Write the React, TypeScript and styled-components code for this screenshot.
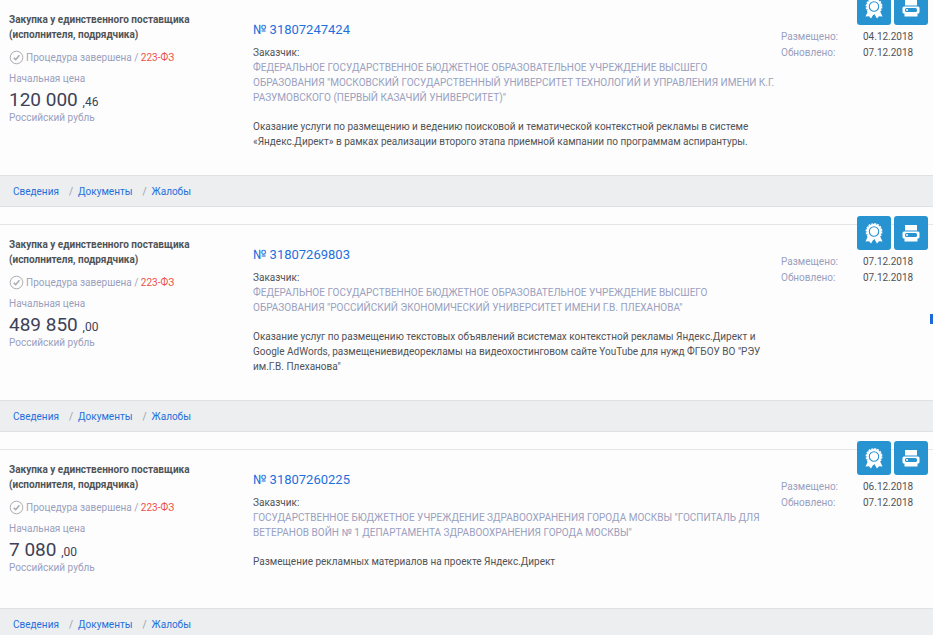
import React from "react";
import styled, { createGlobalStyle } from "styled-components";

const GlobalStyle = createGlobalStyle`
  * { box-sizing: border-box; }
  body {
    margin: 0;
    background: #fdfdfd;
    color: #505357;
    font-family: Roboto, "Liberation Sans", sans-serif;
    font-size: 10px;
    line-height: 15px;
  }
`;

const Page = styled.main`
  position: relative;
  height: 100vh;
  overflow: hidden;
`;

const List = styled.div`
  display: flex;
  flex-direction: column;
  gap: 17px;
  margin-top: -1px;
`;

const Card = styled.article`
  border-top: 1px solid #e3e5e8;
`;

const CardBody = styled.div`
  display: grid;
  grid-template-columns: 244px minmax(0, 1fr) 152px;
  padding-left: 9px;
`;

const Summary = styled.div`
  padding: 12px 0 33px;
`;

const Method = styled.h2`
  max-width: 200px;
  margin: 0 0 8px;
  font-size: 10px;
  line-height: 15px;
  font-weight: 700;
`;

const Status = styled.div`
  display: flex;
  align-items: center;
  gap: 2px;
  margin-bottom: 6px;
  color: #9a9fbd;
`;

const Law = styled.span`
  color: #ee5148;
`;

const Muted = styled.div`
  color: #9a9fbd;
`;

const Price = styled.div`
  padding-top: 3px;
  color: #3d4257;
  font-size: 19px;
  line-height: 21px;
`;

const Cents = styled.span`
  font-size: 12px;
  line-height: 12px;
`;

const Details = styled.div`
  padding: 21px 0 26px;
`;

const NumberLink = styled.a`
  display: block;
  margin-bottom: 6px;
  color: #1f70dc;
  font-size: 13px;
  line-height: 18px;
  text-decoration: none;
`;

const Client = styled.div`
  margin-bottom: 14px;
  color: #99a0c0;
`;

const Subject = styled.p`
  max-width: 520px;
  margin: 0;
`;

const Aside = styled.div`
  margin-top: -9px;
  margin-left: -9px;
  padding-right: 5px;
`;

const Actions = styled.div`
  display: flex;
  justify-content: flex-end;
  gap: 3px;
  margin-bottom: 4px;
`;

const ActionButton = styled.button`
  display: flex;
  align-items: center;
  justify-content: center;
  width: 34px;
  height: 34px;
  padding: 0;
  border: 0;
  border-radius: 3px;
  background: #2893d1;
  color: #fff;
  cursor: pointer;
`;

const Dates = styled.dl`
  display: grid;
  grid-template-columns: 82px 1fr;
  margin: 0;
  padding-left: 9px;
  line-height: 16px;
`;

const DateLabel = styled.dt`
  color: #9a9fbd;
`;

const DateValue = styled.dd`
  margin: 0;
`;

const CardFooter = styled.nav`
  display: flex;
  align-items: center;
  height: 32px;
  padding-left: 13px;
  border-top: 1px solid #dfe2e5;
  border-bottom: 1px solid #dfe2e5;
  background: #eceef0;
`;

const FooterLink = styled.a`
  color: #1f70dc;
  text-decoration: none;

  & + &::before {
    content: "/";
    margin: 0 5px 0 10px;
    color: #9a9da5;
  }
`;

const ScrollMark = styled.div`
  position: absolute;
  top: 314px;
  right: 0;
  width: 3px;
  height: 10px;
  background: #1c68dc;
`;

const CheckIcon = () => (
  <svg width="15" height="15" viewBox="0 0 15 15" fill="none" stroke="#acaeb3" aria-hidden="true">
    <circle cx="7.5" cy="7.5" r="6.3" strokeWidth="1" />
    <path d="M4.7 7.8 6.7 9.7 10.4 5.2" strokeWidth="1.6" />
  </svg>
);

const BadgeIcon = () => (
  <svg width="20" height="22" viewBox="0 0 20 22" fill="none" aria-hidden="true">
    <path d="M5 12 1.500 19.500 5 19.200 7 21.500 10 16.500 13 21.500 15 19.200 18.500 19.500 15 12Z" fill="#fff" />
    <circle cx="10" cy="9.500" r="7.700" stroke="#fff" strokeWidth="1.400" strokeDasharray="2 1.024" />
    <circle cx="10" cy="9.500" r="7.400" fill="#fff" />
    <circle cx="10" cy="9.500" r="4.700" stroke="#2893d1" strokeWidth="1.100" />
  </svg>
);

const PrinterIcon = () => (
  <svg width="18" height="18" viewBox="0 0 18 18" fill="none" aria-hidden="true">
    <path d="M3 1h12v5.500H3z" fill="#fff" />
    <path d="M2 7.500h14A1.500 1.500 0 0 1 17.500 9v4A1.500 1.500 0 0 1 16 14.500h-.5V17.500h-13v-3H2A1.500 1.500 0 0 1 .5 13V9A1.500 1.500 0 0 1 2 7.500Z" fill="#fff" />
    <rect x="3" y="9" width="12" height="4" rx="1.500" fill="#2893d1" />
    <circle cx="5" cy="11" r="1" fill="#fff" />
  </svg>
);

type Purchase = {
  id: string;
  rubles: string;
  cents: string;
  client: string;
  subject: string;
  placed: string;
  updated: string;
};

const purchases: Purchase[] = [
  {
    id: "31807247424",
    rubles: "120 000",
    cents: "46",
    client:
      "ФЕДЕРАЛЬНОЕ ГОСУДАРСТВЕННОЕ БЮДЖЕТНОЕ ОБРАЗОВАТЕЛЬНОЕ УЧРЕЖДЕНИЕ ВЫСШЕГО ОБРАЗОВАНИЯ \"МОСКОВСКИЙ ГОСУДАРСТВЕННЫЙ УНИВЕРСИТЕТ ТЕХНОЛОГИЙ И УПРАВЛЕНИЯ ИМЕНИ К.Г. РАЗУМОВСКОГО (ПЕРВЫЙ КАЗАЧИЙ УНИВЕРСИТЕТ)\"",
    subject:
      "Оказание услуги по размещению и ведению поисковой и тематической контекстной рекламы в системе «Яндекс.Директ» в рамках реализации второго этапа приемной кампании по программам аспирантуры.",
    placed: "04.12.2018",
    updated: "07.12.2018",
  },
  {
    id: "31807269803",
    rubles: "489 850",
    cents: "00",
    client:
      "ФЕДЕРАЛЬНОЕ ГОСУДАРСТВЕННОЕ БЮДЖЕТНОЕ ОБРАЗОВАТЕЛЬНОЕ УЧРЕЖДЕНИЕ ВЫСШЕГО ОБРАЗОВАНИЯ \"РОССИЙСКИЙ ЭКОНОМИЧЕСКИЙ УНИВЕРСИТЕТ ИМЕНИ Г.В. ПЛЕХАНОВА\"",
    subject:
      "Оказание услуг по размещению текстовых объявлений всистемах контекстной рекламы Яндекс.Директ и Google AdWords, размещениевидеорекламы на видеохостинговом сайте YouTube для нужд ФГБОУ ВО \"РЭУ им.Г.В. Плеханова\"",
    placed: "07.12.2018",
    updated: "07.12.2018",
  },
  {
    id: "31807260225",
    rubles: "7 080",
    cents: "00",
    client:
      "ГОСУДАРСТВЕННОЕ БЮДЖЕТНОЕ УЧРЕЖДЕНИЕ ЗДРАВООХРАНЕНИЯ ГОРОДА МОСКВЫ \"ГОСПИТАЛЬ ДЛЯ ВЕТЕРАНОВ ВОЙН № 1 ДЕПАРТАМЕНТА ЗДРАВООХРАНЕНИЯ ГОРОДА МОСКВЫ\"",
    subject: "Размещение рекламных материалов на проекте Яндекс.Директ",
    placed: "06.12.2018",
    updated: "07.12.2018",
  },
];

const PurchaseCard = ({ item }: { item: Purchase }) => (
  <Card>
    <CardBody>
      <Summary>
        <Method>Закупка у единственного поставщика (исполнителя, подрядчика)</Method>
        <Status>
          <CheckIcon />
          <span>
            Процедура завершена / <Law>223-ФЗ</Law>
          </span>
        </Status>
        <Muted>Начальная цена</Muted>
        <Price>
          {item.rubles} <Cents>,{item.cents}</Cents>
        </Price>
        <Muted>Российский рубль</Muted>
      </Summary>
      <Details>
        <NumberLink href="#">№ {item.id}</NumberLink>
        <div>Заказчик:</div>
        <Client>{item.client}</Client>
        <Subject>{item.subject}</Subject>
      </Details>
      <Aside>
        <Actions>
          <ActionButton type="button" aria-label="Электронная подпись">
            <BadgeIcon />
          </ActionButton>
          <ActionButton type="button" aria-label="Печать">
            <PrinterIcon />
          </ActionButton>
        </Actions>
        <Dates>
          <DateLabel>Размещено:</DateLabel>
          <DateValue>{item.placed}</DateValue>
          <DateLabel>Обновлено:</DateLabel>
          <DateValue>{item.updated}</DateValue>
        </Dates>
      </Aside>
    </CardBody>
    <CardFooter>
      <FooterLink href="#">Сведения</FooterLink>
      <FooterLink href="#">Документы</FooterLink>
      <FooterLink href="#">Жалобы</FooterLink>
    </CardFooter>
  </Card>
);

export default function App() {
  return (
    <Page>
      <GlobalStyle />
      <List>
        {purchases.map((item) => (
          <PurchaseCard key={item.id} item={item} />
        ))}
      </List>
      <ScrollMark />
    </Page>
  );
}
